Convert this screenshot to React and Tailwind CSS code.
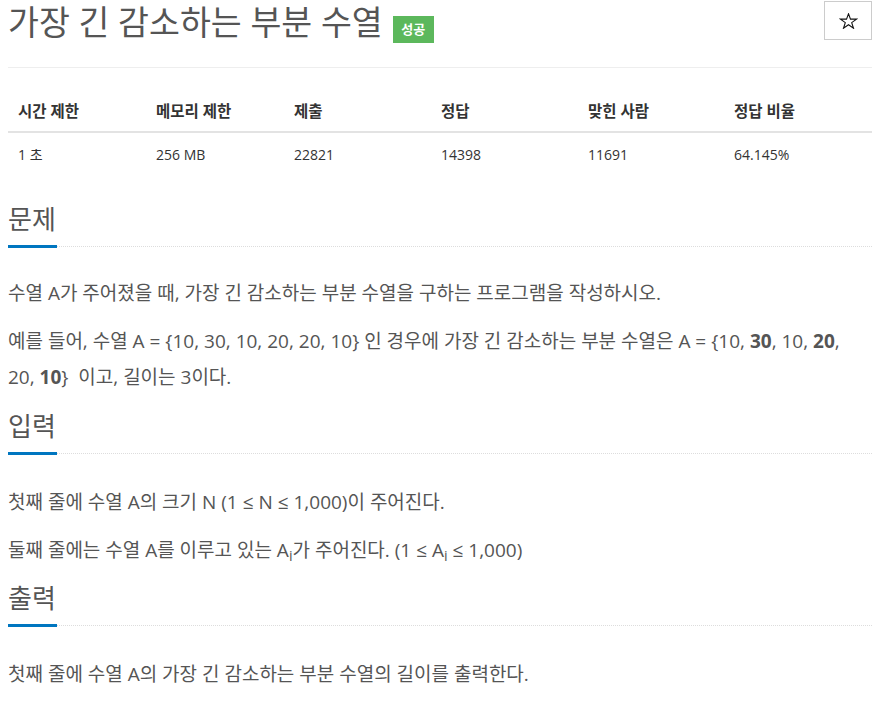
import React from "react";

const FONT = "font-['Open_Sans','Noto_Sans_CJK_KR',sans-serif]";

function Heading({ children, className = "" }) {
  return (
    <div className={`flex items-end ${className}`}>
      <span className="text-[26px] leading-[32px] pb-[10px] border-b-[3px] border-[#0076c0] text-[#555] pr-px">
        {children}
      </span>
      <div className="flex-1 border-b border-dotted border-[#ddd] mb-[1px]" />
    </div>
  );
}

function P({ children }) {
  return <p className="text-[19px] leading-[36px] text-[#555] mb-3">{children}</p>;
}

function Star() {
  return (
    <svg width="19" height="16" viewBox="0 0 24 21" fill="none" stroke="#111" strokeWidth="1.4" strokeLinejoin="miter">
      <polygon points="12,1 14.6,8 22.5,8 16.2,12.6 18.6,20 12,15.4 5.4,20 7.8,12.6 1.5,8 9.4,8" />
    </svg>
  );
}

export default function App() {
  const heads = ["시간 제한", "메모리 제한", "제출", "정답", "맞힌 사람", "정답 비율"];
  const vals = ["1 초", "256 MB", "22821", "14398", "11691", "64.145%"];
  return (
    <div className={`${FONT} bg-white w-[884px] min-h-[708px] pl-2 pr-3 text-[#555]`}>
      {/* Title row */}
      <div className="flex items-start justify-between pt-[2px]">
        <div className="flex items-start">
          <h1 className="text-[33.6px] leading-[40px] text-[#555] font-normal">가장 긴 감소하는 부분 수열</h1>
          <span className="ml-[10px] mt-[14px] w-[41px] h-[27px] bg-[#5cb85c] text-white text-[13px] font-bold flex items-center justify-center">
            성공
          </span>
        </div>
        <button className="-mt-px w-[48px] h-[39px] border border-[#ccc] bg-white flex items-center justify-center">
          <Star />
        </button>
      </div>
      <div className="mt-[24px] border-t border-[#eee]" />

      {/* Table */}
      <div className="mt-[25px] text-[14px] text-[#333]">
        <div className="grid grid-cols-[138px_138px_147px_147px_146px_1fr] h-[40px] items-center border-b-2 border-[#e3e3e3] font-bold text-[15.5px]">
          {heads.map((h) => (
            <div key={h} className="px-[10px]">{h}</div>
          ))}
        </div>
        <div className="grid grid-cols-[138px_138px_147px_147px_146px_1fr] h-[42px] items-center">
          {vals.map((v) => (
            <div key={v} className="px-[10px]">{v}</div>
          ))}
        </div>
      </div>

      <Heading className="mt-[28px]">문제</Heading>
      <div className="mt-[27px]">
        <P>수열 A가 주어졌을 때, 가장 긴 감소하는 부분 수열을 구하는 프로그램을 작성하시오.</P>
        <P>
          예를 들어, 수열 A = {"{"}10, 30, 10, 20, 20, 10{"}"} 인 경우에 가장 긴 감소하는 부분 수열은 A = {"{"}10,{" "}
          <b className="font-bold">30</b>, 10, <b className="font-bold">20</b>, 20,{"\u00a0"}
          <b className="font-bold">10</b>
          {"}"}{"\u00a0 "}이고, 길이는 3이다.
        </P>
      </div>

      <Heading className="mt-[15px]">입력</Heading>
      <div className="mt-[29px]">
        <P>첫째 줄에 수열 A의 크기 N (1 ≤ N ≤ 1,000)이 주어진다.</P>
        <P>
          둘째 줄에는 수열 A를 이루고 있는 A<sub>i</sub>가 주어진다. (1 ≤ A<sub>i</sub> ≤ 1,000)
        </P>
      </div>

      <Heading className="mt-[14px]">출력</Heading>
      <div className="mt-[29px]">
        <P>첫째 줄에 수열 A의 가장 긴 감소하는 부분 수열의 길이를 출력한다.</P>
      </div>
    </div>
  );
}
